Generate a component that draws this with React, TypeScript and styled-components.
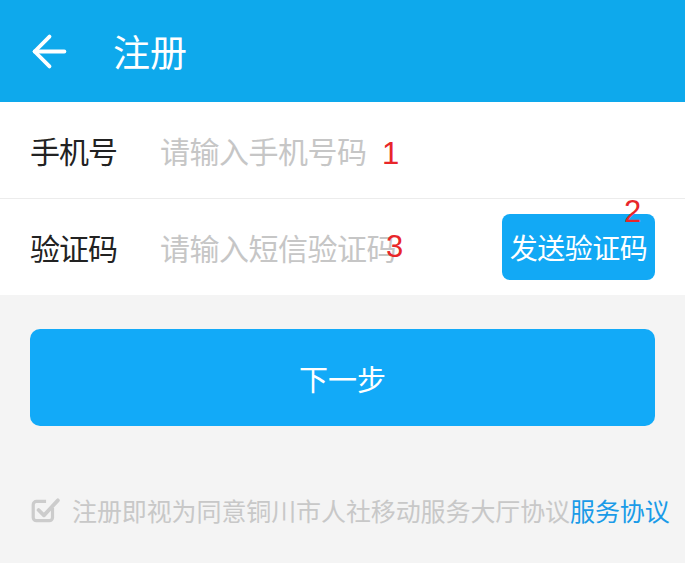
import React from 'react'
import styled, { createGlobalStyle } from 'styled-components'
import { ArrowLeft } from 'lucide-react'

const GlobalStyle = createGlobalStyle`
  html, body {
    margin: 0;
    padding: 0;
    background: #f4f4f4;
    font-family: "Noto Sans CJK SC", "Noto Sans", sans-serif;
  }
`

const Page = styled.div`
  width: 685px;
  height: 563px;
  overflow: hidden;
  background: #f4f4f4;
`

const Header = styled.header`
  height: 102px;
  background: #0ea9ec;
  display: flex;
  align-items: center;
  padding-left: 24px;
  box-sizing: border-box;
  color: #fff;
`

const Title = styled.h1`
  margin: 0 0 0 38px;
  font-size: 37px;
  font-weight: 400;
  line-height: 1;
`

const Form = styled.div`
  background: #fff;
`

const Row = styled.div<{ $divider?: boolean }>`
  position: relative;
  height: 96px;
  display: flex;
  align-items: center;
  padding: 0 30px;
  border-bottom: ${(p) => (p.$divider ? '1px solid #ececec' : 'none')};
`

const Label = styled.span`
  width: 130px;
  flex-shrink: 0;
  font-size: 30px;
  color: #222;
  letter-spacing: -1px;
`

const Input = styled.input<{ $w: number }>`
  width: ${(p) => p.$w}px;
  border: none;
  outline: none;
  padding: 0;
  background: transparent;
  font-family: inherit;
  font-size: 30px;
  color: #333;
  letter-spacing: -0.5px;
  &::placeholder {
    color: #c6c6c6;
  }
`

const Mark = styled.span<{ $x: number; $y: number }>`
  position: absolute;
  left: ${(p) => p.$x}px;
  top: ${(p) => p.$y}px;
  font-family: "Liberation Sans", Arial, sans-serif;
  font-size: 31px;
  line-height: 1;
  color: #e8262a;
  z-index: 2;
`

const SendButton = styled.button`
  margin-left: auto;
  width: 153px;
  height: 66px;
  border: none;
  border-radius: 8px;
  background: #12a9f5;
  color: #fff;
  font-family: inherit;
  font-size: 28px;
  padding: 0;
  letter-spacing: -0.5px;
`

const Actions = styled.div`
  padding: 34px 30px 0;
`

const NextButton = styled.button`
  width: 100%;
  height: 97px;
  border: none;
  border-radius: 10px;
  background: #12aaf8;
  color: #fff;
  font-family: inherit;
  font-size: 29px;
`

const Agreement = styled.div`
  display: flex;
  align-items: center;
  padding: 66px 0 0 30px;
  font-size: 25px;
  color: #c8c8c8;
  white-space: nowrap;
  letter-spacing: -0.1px;
`

const Link = styled.span`
  color: #1a9be8;
`

const CheckIcon = () => (
  <svg width="30" height="30" viewBox="0 0 28 28" style={{ marginRight: 12 }}>
    <path d="M21 12v9a3 3 0 0 1-3 3H6a3 3 0 0 1-3-3V9a3 3 0 0 1 3-3h9" fill="none" stroke="#cccccc" strokeWidth="3" />
    <path d="M8 14l5 5L26 5" fill="none" stroke="#cccccc" strokeWidth="3.5" strokeLinecap="round" strokeLinejoin="round" />
  </svg>
)

const App = () => {
  return (
    <>
      <GlobalStyle />
      <Page>
        <Header>
          <ArrowLeft size={51} strokeWidth={1.8} />
          <Title>注册</Title>
        </Header>
        <Form>
          <Row $divider>
            <Label>手机号</Label>
            <Input $w={240} placeholder="请输入手机号码" />
            <Mark $x={382} $y={36}>1</Mark>
          </Row>
          <Row>
            <Label>验证码</Label>
            <Input $w={238} placeholder="请输入短信验证码" />
            <Mark $x={386} $y={32}>3</Mark>
            <SendButton>发送验证码</SendButton>
            <Mark $x={624} $y={-3}>2</Mark>
          </Row>
        </Form>
        <Actions>
          <NextButton>下一步</NextButton>
        </Actions>
        <Agreement>
          <CheckIcon />
          注册即视为同意铜川市人社移动服务大厅协议<Link>服务协议</Link>
        </Agreement>
      </Page>
    </>
  )
}

export default App
